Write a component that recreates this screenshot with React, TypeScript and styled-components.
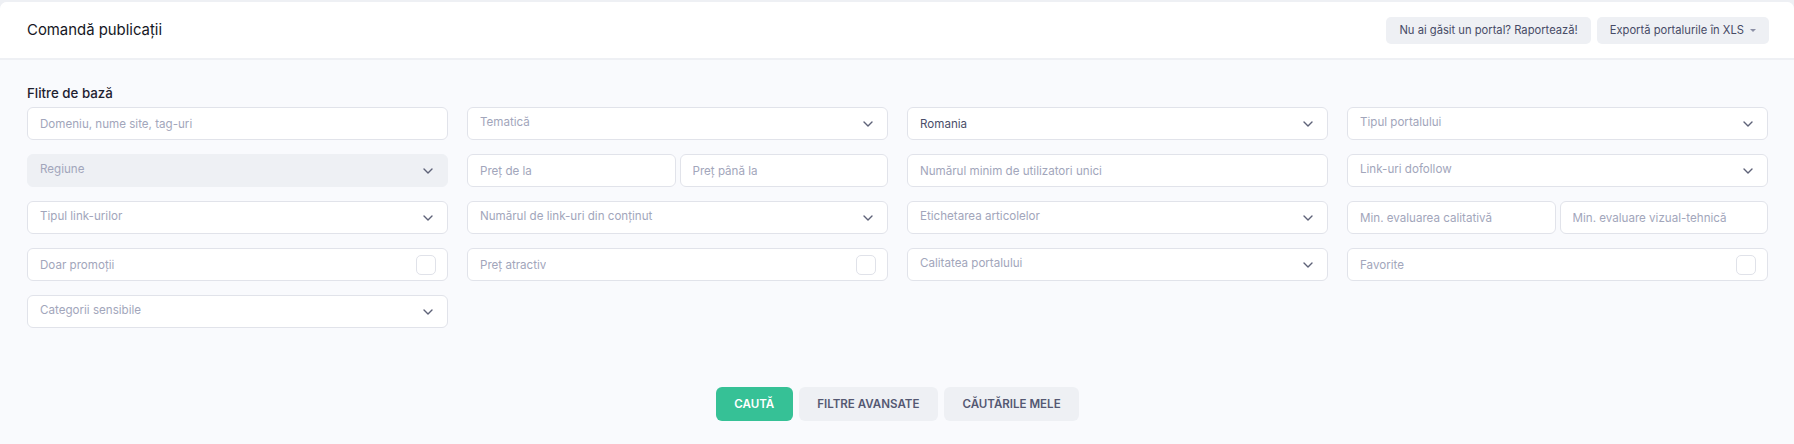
import React from 'react'
import styled, { createGlobalStyle } from 'styled-components'

const GlobalStyle = createGlobalStyle`
  html, body {
    margin: 0;
    padding: 0;
    background: #eef0f4;
    font-family: Inter, "Noto Sans", "Liberation Sans", sans-serif;
  }
  * { box-sizing: border-box; }
`

type Cell =
  | { kind: 'input'; text: string }
  | { kind: 'select'; text: string; value?: boolean; disabled?: boolean }
  | { kind: 'check'; text: string }
  | { kind: 'pair'; left: string; right: string }

const rows: Cell[][] = [
  [
    { kind: 'input', text: 'Domeniu, nume site, tag-uri' },
    { kind: 'select', text: 'Tematică' },
    { kind: 'select', text: 'Romania', value: true },
    { kind: 'select', text: 'Tipul portalului' },
  ],
  [
    { kind: 'select', text: 'Regiune', disabled: true },
    { kind: 'pair', left: 'Preț de la', right: 'Preț până la' },
    { kind: 'input', text: 'Numărul minim de utilizatori unici' },
    { kind: 'select', text: 'Link-uri dofollow' },
  ],
  [
    { kind: 'select', text: 'Tipul link-urilor' },
    { kind: 'select', text: 'Numărul de link-uri din conținut' },
    { kind: 'select', text: 'Etichetarea articolelor' },
    { kind: 'pair', left: 'Min. evaluarea calitativă', right: 'Min. evaluare vizual-tehnică' },
  ],
  [
    { kind: 'check', text: 'Doar promoții' },
    { kind: 'check', text: 'Preț atractiv' },
    { kind: 'select', text: 'Calitatea portalului' },
    { kind: 'check', text: 'Favorite' },
  ],
  [{ kind: 'select', text: 'Categorii sensibile' }],
]

const Chevron = () => (
  <ChevronIcon width="10" height="6" viewBox="0 0 10 6">
    <polyline points="1,1 5,5 9,1" fill="none" stroke="#5e6278" strokeWidth="1.4" strokeLinecap="round" strokeLinejoin="round" />
  </ChevronIcon>
)

const renderCell = (cell: Cell, i: number) => {
  switch (cell.kind) {
    case 'input':
      return <Field key={i}><Placeholder>{cell.text}</Placeholder></Field>
    case 'select':
      return (
        <Field key={i} $disabled={cell.disabled}>
          <SelectText $value={cell.value}>{cell.text}</SelectText>
          <Chevron />
        </Field>
      )
    case 'check':
      return (
        <Field key={i}>
          <Placeholder>{cell.text}</Placeholder>
          <CheckBox />
        </Field>
      )
    case 'pair':
      return (
        <Pair key={i}>
          <Field><Placeholder>{cell.left}</Placeholder></Field>
          <Field><Placeholder>{cell.right}</Placeholder></Field>
        </Pair>
      )
  }
}

export default function App() {
  return (
    <>
      <GlobalStyle />
      <Page>
        <Card>
          <Header>
            <Title>Comandă publicații</Title>
            <HeaderActions>
              <LightButton>Nu ai găsit un portal? Raportează!</LightButton>
              <LightButton>
                Exportă portalurile în XLS
                <Caret />
              </LightButton>
            </HeaderActions>
          </Header>
          <Body>
            <SectionLabel>Flitre de bază</SectionLabel>
            <Grid>{rows.flat().map(renderCell)}</Grid>
            <Actions>
              <ActionButton $primary>Caută</ActionButton>
              <ActionButton>Filtre avansate</ActionButton>
              <ActionButton>Căutările mele</ActionButton>
            </Actions>
          </Body>
        </Card>
      </Page>
    </>
  )
}

const Page = styled.div`
  padding-top: 2px;
  min-height: 444px;
`

const Card = styled.div`
  border-radius: 7px 7px 0 0;
  overflow: hidden;
  background: #f9fafd;
`

const Header = styled.div`
  display: flex;
  align-items: center;
  justify-content: space-between;
  height: 58px;
  padding: 0 25px 0 27px;
  background: #ffffff;
  border-bottom: 2px solid #eef0f4;
`

const Title = styled.h1`
  margin: 0;
  font-size: 14.9px;
  font-weight: 400;
  color: #151724;
`

const HeaderActions = styled.div`
  display: flex;
  gap: 6px;
`

const LightButton = styled.button`
  display: flex;
  align-items: center;
  gap: 6px;
  height: 27px;
  padding: 0 13px;
  border: none;
  border-radius: 5px;
  background: #eef0f4;
  font-family: inherit;
  font-size: 11.2px;
  font-weight: 400;
  color: #474b66;
`

const Caret = styled.span`
  width: 0;
  height: 0;
  border-left: 3px solid transparent;
  border-right: 3px solid transparent;
  border-top: 3.5px solid #8c90a6;
  margin-top: 1px;
`

const Body = styled.div`
  padding: 23px 26px 23px 27px;
`

const SectionLabel = styled.div`
  font-size: 13.3px;
  line-height: 20px;
  font-weight: 500;
  color: #1e2130;
  margin-bottom: 4px;
`

const Grid = styled.div`
  display: grid;
  grid-template-columns: repeat(4, 1fr);
  column-gap: 19px;
  row-gap: 14px;
`

const Pair = styled.div`
  display: grid;
  grid-template-columns: 1fr 1fr;
  gap: 4px;
`

const Field = styled.div<{ $disabled?: boolean }>`
  display: flex;
  align-items: center;
  justify-content: space-between;
  height: 33px;
  padding: 0 12px;
  border: 1px solid ${({ $disabled }) => ($disabled ? '#eef0f4' : '#e1e3ea')};
  border-radius: 6px;
  background: ${({ $disabled }) => ($disabled ? '#eef0f4' : '#ffffff')};
`

const Placeholder = styled.span`
  font-size: 11.6px;
  color: #a2a6bb;
  white-space: nowrap;
  overflow: hidden;
`

const SelectText = styled.span<{ $value?: boolean }>`
  font-size: 11.6px;
  color: ${({ $value }) => ($value ? '#4a4e69' : '#a2a6bb')};
  padding-bottom: ${({ $value }) => ($value ? '0' : '4px')};
  white-space: nowrap;
`

const ChevronIcon = styled.svg`
  flex: none;
  margin-right: 2px;
`

const CheckBox = styled.span`
  flex: none;
  width: 20px;
  height: 20px;
  margin-right: -1px;
  border: 1px solid #e0e2e9;
  border-radius: 5px;
  background: #ffffff;
`

const Actions = styled.div`
  display: flex;
  justify-content: center;
  gap: 6px;
  margin-top: 59px;
`

const ActionButton = styled.button<{ $primary?: boolean }>`
  height: 34px;
  padding: 0 18.5px;
  border: none;
  border-radius: 6px;
  font-family: inherit;
  font-size: 11.55px;
  font-weight: 600;
  text-transform: uppercase;
  background: ${({ $primary }) => ($primary ? '#36c196' : '#eef0f4')};
  color: ${({ $primary }) => ($primary ? '#ffffff' : '#545872')};
`
